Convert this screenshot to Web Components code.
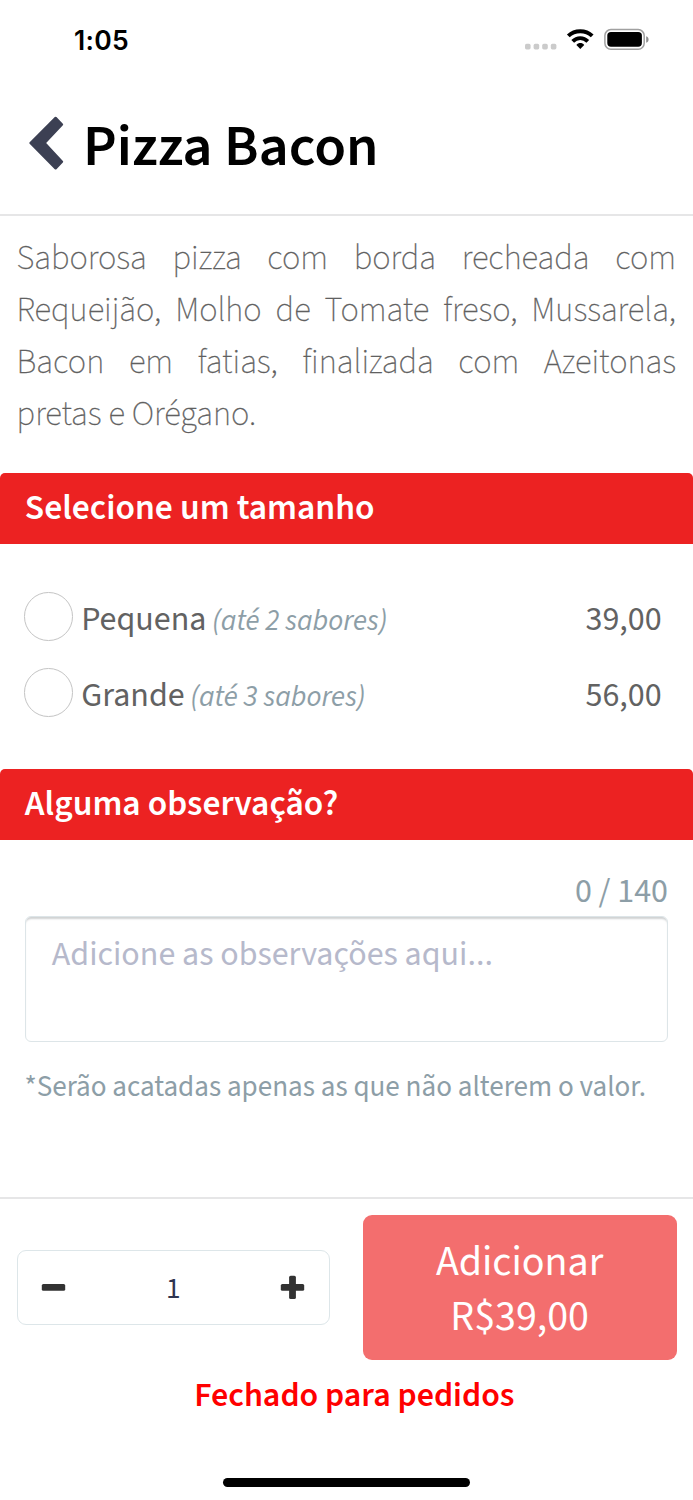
<!DOCTYPE html>
<html lang="pt-BR">
<head>
<meta charset="utf-8">
<title>Pizza Bacon</title>
<style>
html,body{margin:0;padding:0;background:#fff}
body{font-family:"Source Sans 3","Noto Sans CJK SC",sans-serif;color:#626262;width:693px;height:1500px;overflow:hidden}
</style>
</head>
<body>
<product-page></product-page>
<script>
const define = (name, html) => {
  const tpl = document.createElement('template');
  tpl.innerHTML = html;
  customElements.define(name, class extends HTMLElement {
    constructor() {
      super();
      this.attachShadow({ mode: 'open' }).append(tpl.content.cloneNode(true));
    }
  });
};

define('status-bar', `
<style>
:host{display:flex;justify-content:space-between;height:80px;box-sizing:border-box;padding:0 43px 0 74px;color:#000}
.time{font:560 26.5px/80px Inter,"Liberation Sans",sans-serif;letter-spacing:.3px}
svg{display:block;margin-top:20px}
</style>
<span class="time"><slot></slot></span>
<svg width="126" height="40" viewBox="524 20 126 40">
  <g fill="#cbcbcb"><rect x="525" y="43.8" width="5.6" height="5.6" rx="1.6"/><rect x="533.6" y="43.8" width="5.6" height="5.6" rx="1.6"/><rect x="542.2" y="43.8" width="5.6" height="5.6" rx="1.6"/><rect x="550.8" y="43.8" width="5.6" height="5.6" rx="1.6"/></g>
  <path d="M568.3 35.9C574.8 29.7 585.6 29.7 592.2 35.9" fill="none" stroke="#000" stroke-width="4"/>
  <path d="M572.7 41.3C577 37 583.5 37 587.8 41.3" fill="none" stroke="#000" stroke-width="3.9"/>
  <path d="M576.4 44.9C578.4 42.4 582.2 42.4 584.2 44.9L580.3 49Z"/>
  <rect x="604.9" y="29.6" width="39.3" height="19.6" rx="6" fill="none" stroke="#a0a0a0" stroke-width="1.5"/>
  <rect x="607.3" y="32" width="34.6" height="14.8" rx="3.7"/>
  <path d="M646.2 36.2C649.4 37.3 649.4 41.7 646.2 42.8Z" fill="#8e8e8e"/>
</svg>`);

define('page-header', `
<style>
:host{display:flex;align-items:center;height:134px;border-bottom:2px solid #e6e6e7;padding-left:28px}
h1{margin:0 0 0 19px;font-size:58.1px;line-height:76px;font-weight:600;color:#000}
svg{display:block;margin-top:-9px}
</style>
<svg width="36" height="56" viewBox="28 114.5 36 56"><path d="M55.6 117.4L62 124L44.6 142.5L62 161.2L55.6 167.8L30.5 142.5Z" fill="#3c4053" stroke="#3c4053" stroke-width="2.4" stroke-linejoin="round"/></svg>
<h1><slot></slot></h1>`);

define('product-description', `
<style>
:host{display:block;padding:17px 17px 31.5px 16.6px;font-size:34.4px;line-height:52px;font-weight:200;color:#606060;-webkit-text-stroke:.3px #606060;text-align:justify}
</style>
<slot></slot>`);

define('section-title', `
<style>
:host{display:block;height:71.2px;box-sizing:border-box;padding:.4px 0 0 24.8px;background:#ec2222;border-radius:5px 5px 0 0;color:#fff;font-size:35.5px;font-weight:600;line-height:71px}
</style>
<slot></slot>`);

define('size-option', `
<style>
:host{display:flex;align-items:center;height:76.2px;padding:0 31.4px 0 24.4px;font-size:34px;line-height:44px}
.radio{width:48.6px;height:48.6px;box-sizing:border-box;border:1.6px solid #c4c4c4;border-radius:50%;margin-right:8.2px}
.label{flex:1;padding-top:7.4px;white-space:nowrap}
.price{padding-top:7.2px}
::slotted(em){font-size:29.2px;color:#8d9ea7;margin-left:-1px}
</style>
<span class="radio"></span><span class="label"><slot></slot></span><span class="price"><slot name="price"></slot></span>`);

define('note-field', `
<style>
:host{display:block;padding:30px 25px 0 24.5px;color:#8d9ea7}
.count{text-align:right;font-size:34px;line-height:44px}
.box{margin-top:1.6px;height:126px;box-sizing:border-box;border:1.6px solid #dde5e8;border-radius:6px;box-shadow:inset 0 3px 2px -1px #d0d2d3;padding:16.6px 26.3px;font-size:34px;line-height:44px;color:#b6b9cb}
.hint{margin-top:23px;font-size:29.1px;line-height:44px;white-space:nowrap}
</style>
<div class="count"><slot name="count"></slot></div>
<div class="box"><slot></slot></div>
<div class="hint"><slot name="hint"></slot></div>`);

define('quantity-stepper', `
<style>
:host{display:flex;align-items:center;justify-content:space-between;width:313.4px;height:75px;box-sizing:border-box;border:1.6px solid #dde6e9;border-radius:9px;padding:0 23.6px;color:#2f3550;font-size:29.3px;line-height:40px}
svg{display:block;fill:#323232}
span{padding-top:4px}
</style>
<svg width="25" height="25" viewBox="0 0 25 25"><rect x=".8" y="9" width="23.4" height="6.8" rx="1.6"/></svg>
<span><slot></slot></span>
<svg width="25" height="25" viewBox="0 0 25 25"><rect x=".8" y="9" width="23.4" height="6.8" rx="1.6"/><rect x="9.1" y=".7" width="6.8" height="23.4" rx="1.6"/></svg>`);

define('add-button', `
<style>
:host{display:flex;flex-direction:column;justify-content:center;width:314px;height:145.8px;box-sizing:border-box;padding-top:5px;background:#f36e6e;border-radius:9px;color:#fff;font-size:42px;line-height:55px;text-align:center}
</style>
<slot></slot>`);

define('order-footer', `
<style>
:host{display:block;border-top:2px solid #e6e6e7;height:303px;box-sizing:border-box}
.row{display:flex;align-items:center;justify-content:space-between;padding:15.6px 16.4px 0 16.5px}
.msg{margin-top:13.2px;padding-left:15.5px;text-align:center;font-size:34px;line-height:44px;font-weight:600;color:#f00}
.home{width:247.6px;height:8.8px;border-radius:5px;background:#000;margin:60.9px auto 0}
</style>
<div class="row"><slot></slot></div>
<div class="msg"><slot name="message"></slot></div>
<div class="home"></div>`);

define('product-page', `
<style>
:host{display:flex;flex-direction:column;width:693px;height:1500px}
.sizes{padding:34.6px 0 38.2px}
order-footer{margin-top:auto}
</style>
<status-bar>1:05</status-bar>
<page-header>Pizza Bacon</page-header>
<product-description>Saborosa pizza com borda recheada com Requeijão, Molho de Tomate freso, Mussarela, Bacon em fatias, finalizada com Azeitonas pretas e Orégano.</product-description>
<section-title>Selecione um tamanho</section-title>
<div class="sizes">
  <size-option>Pequena <em>(até 2 sabores)</em><span slot="price">39,00</span></size-option>
  <size-option>Grande <em>(até 3 sabores)</em><span slot="price">56,00</span></size-option>
</div>
<section-title>Alguma observação?</section-title>
<note-field>Adicione as observações aqui...<span slot="count">0 / 140</span><span slot="hint">*Serão acatadas apenas as que não alterem o valor.</span></note-field>
<order-footer>
  <quantity-stepper>1</quantity-stepper>
  <add-button><div>Adicionar</div><div>R$39,00</div></add-button>
  <span slot="message">Fechado para pedidos</span>
</order-footer>`);
</script>
</body>
</html>
